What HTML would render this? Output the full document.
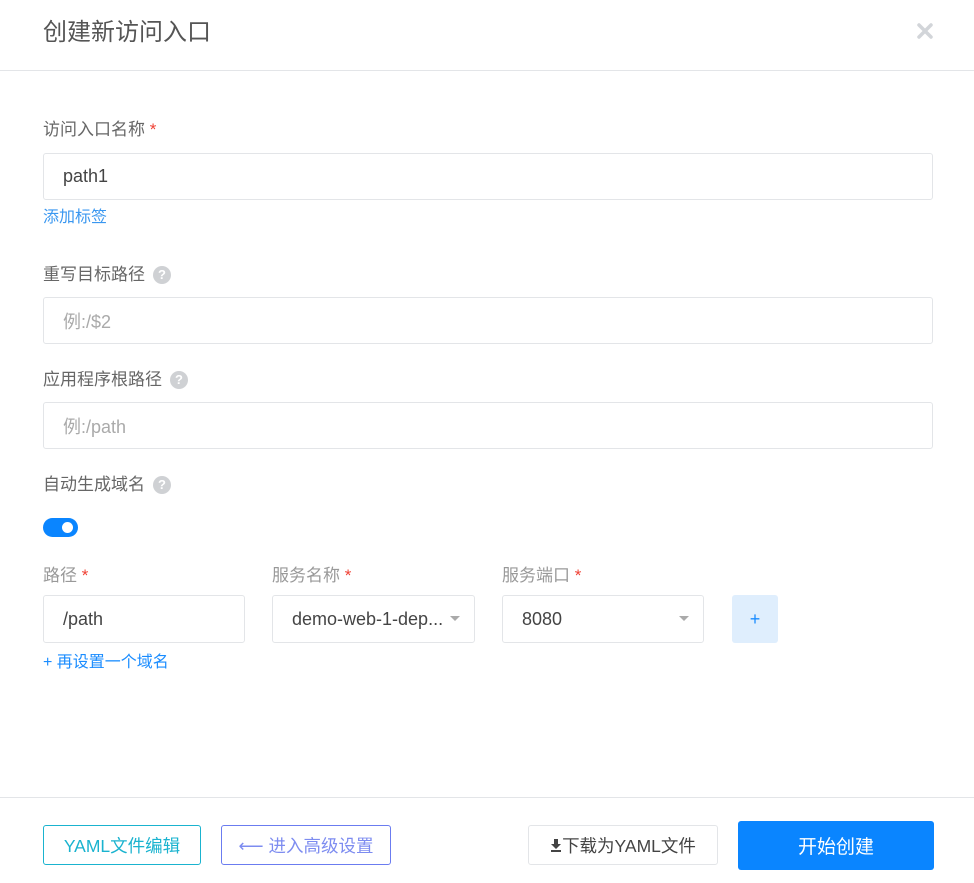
<!DOCTYPE html>
<html><head><meta charset="utf-8"><style>
body{margin:0;width:974px;height:883px;background:#fff;position:relative;overflow:hidden;font-family:"Liberation Sans","Noto Sans CJK SC",sans-serif;}
.a{position:absolute;}
.lbl{font-size:17px;color:#666;line-height:20px;}
.inp{position:absolute;border:1px solid #e3e5e8;border-radius:3px;box-sizing:border-box;font-size:18px;color:#444;padding-left:19px;display:flex;align-items:center;}
.star{color:#f04134;}
.q{display:inline-block;width:18px;height:18px;border-radius:50%;background:#cfd1d4;color:#fff;font-size:13px;font-weight:bold;text-align:center;line-height:18px;vertical-align:1px;margin-left:8px;}
.arr{position:absolute;right:14px;top:20px;width:0;height:0;border-left:5px solid transparent;border-right:5px solid transparent;border-top:5px solid #aaa;}
.btn{position:absolute;box-sizing:border-box;border-radius:3px;display:flex;align-items:center;justify-content:center;font-size:17.5px;}
</style></head><body>
<div class="a" style="left:43px;top:12px;font-size:24px;color:#555;">创建新访问入口</div>
<svg class="a" style="left:916px;top:22px" width="18" height="18" viewBox="0 0 18 18"><path d="M3 3L15 15M15 3L3 15" stroke="#d2d5d9" stroke-width="3.5" stroke-linecap="round"/></svg>
<div class="a" style="left:0;top:70px;width:974px;height:1px;background:#e3e5e8"></div>

<div class="a lbl" style="left:43px;top:120px">访问入口名称 <span class="star">*</span></div>
<div class="inp" style="left:43px;top:153px;width:890px;height:47px">path1</div>
<div class="a" style="left:43px;top:203px;font-size:16px;color:#3a97f0">添加标签</div>

<div class="a lbl" style="left:43px;top:265px">重写目标路径<span class="q">?</span></div>
<div class="inp" style="left:43px;top:297px;width:890px;height:47px;color:#aaa">例:/$2</div>
<div class="a lbl" style="left:43px;top:370px">应用程序根路径<span class="q">?</span></div>
<div class="inp" style="left:43px;top:402px;width:890px;height:47px;color:#aaa">例:/path</div>
<div class="a lbl" style="left:43px;top:475px">自动生成域名<span class="q">?</span></div>
<div class="a" style="left:43px;top:518px;width:35px;height:19px;border-radius:10px;background:#0a85ff"><div class="a" style="right:5px;top:4px;width:11px;height:11px;border-radius:50%;background:#fff"></div></div>

<div class="a lbl" style="left:43px;top:566px;color:#999">路径 <span class="star">*</span></div>
<div class="a lbl" style="left:272px;top:566px;color:#999">服务名称 <span class="star">*</span></div>
<div class="a lbl" style="left:502px;top:566px;color:#999">服务端口 <span class="star">*</span></div>
<div class="inp" style="left:43px;top:595px;width:202px;height:48px">/path</div>
<div class="inp" style="left:272px;top:595px;width:203px;height:48px">demo-web-1-dep...<div class="arr"></div></div>
<div class="inp" style="left:502px;top:595px;width:202px;height:48px">8080<div class="arr"></div></div>
<div class="btn" style="left:732px;top:595px;width:46px;height:48px;background:#dfeefd;color:#1a8cff;font-size:18px">+</div>
<div class="a" style="left:43px;top:648px;font-size:16px;color:#1a8cff">+ 再设置一个域名</div>

<div class="a" style="left:0;top:797px;width:974px;height:1px;background:#e3e5e8"></div>
<div class="btn" style="left:43px;top:825px;width:158px;height:40px;border:1px solid #1ab3cf;color:#1ab3cf">YAML文件编辑</div>
<div class="btn" style="left:221px;top:825px;width:170px;height:40px;border:1px solid #6b7cf0;color:#7d8cf0">⟵ 进入高级设置</div>
<div class="btn" style="left:528px;top:825px;width:190px;height:40px;border:1px solid #e3e5e8;color:#444"><svg width="12" height="14" viewBox="0 0 12 14"><path d="M4 1h4v5h3L6 11 1 6h3z" fill="#444"/><rect x="1" y="12" width="10" height="2" fill="#444"/></svg>下载为YAML文件</div>
<div class="btn" style="left:738px;top:821px;width:196px;height:49px;background:#0a85ff;color:#fff;font-size:19px">开始创建</div>
</body></html>
